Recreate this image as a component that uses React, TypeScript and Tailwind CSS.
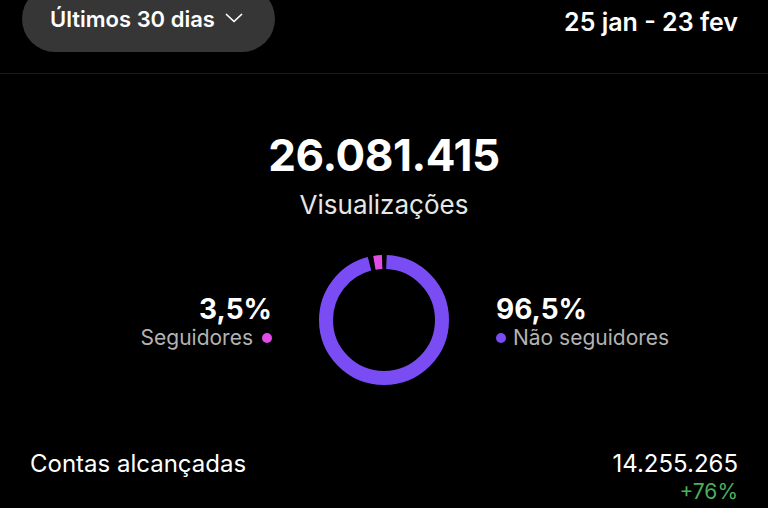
import React from 'react';

const R = 58;
const C = 2 * Math.PI * R;
const GAP = 2.5;

const followersShare = 0.035;

// Ring split into two arcs, starting at 12 o'clock and going clockwise
const Donut: React.FC = () => {
  const purpleLen = C * (1 - followersShare) - GAP * 2;
  const pinkLen = C * followersShare - GAP * 2;
  return (
    <svg width="140" height="140" viewBox="0 0 140 140" className="shrink-0">
      <g transform="rotate(-90 70 70)">
        <circle
          cx="70"
          cy="70"
          r={R}
          fill="none"
          stroke="#7a4cf3"
          strokeWidth="14"
          strokeDasharray={`${purpleLen} ${C - purpleLen}`}
          strokeDashoffset={-GAP}
        />
        <circle
          cx="70"
          cy="70"
          r={R}
          fill="none"
          stroke="#e24ce6"
          strokeWidth="14"
          strokeDasharray={`${pinkLen} ${C - pinkLen}`}
          strokeDashoffset={-(C * (1 - followersShare) + GAP)}
        />
      </g>
    </svg>
  );
};

const App: React.FC = () => {
  return (
    <div className="w-[768px] h-[508px] bg-black text-white overflow-hidden font-['Inter',sans-serif]">
      {/* Header: period picker + range */}
      <div className="h-[74px] flex items-start justify-between pl-[22px] pr-[30px] border-b border-[#1b1b1b]">
        <button className="-mt-[14px] h-[66px] w-[253px] rounded-full bg-[#363636] flex items-center pl-[28px] gap-[10px]">
          <span className="text-[22px] leading-none font-semibold">Últimos 30 dias</span>
          <svg width="18" height="10" viewBox="0 0 18 10" fill="none" className="mt-[-2px]">
            <path d="M1.5 1.5l7.5 7 7.5-7" stroke="white" strokeWidth="1.7" strokeLinecap="round" strokeLinejoin="round" />
          </svg>
        </button>
        <span className="mt-[10px] text-[25px] leading-none font-semibold">25 jan - 23 fev</span>
      </div>

      {/* Views summary */}
      <div className="flex flex-col items-center pt-[59px]">
        <div className="text-[44px] leading-none font-bold tracking-[-0.4px]">26.081.415</div>
        <div className="mt-[15px] text-[26px] leading-none text-[#e6e6e6]">Visualizações</div>

        <div className="mt-[32px] flex items-center">
          <div className="w-[200px] flex flex-col items-end mr-[42px] mt-[4px]">
            <span className="text-[28px] leading-[32px] font-bold">3,5%</span>
            <span className="flex items-center gap-[9px] text-[21px] leading-[26px] text-[#b3b3b3] whitespace-nowrap">
              Seguidores
              <span className="w-[10px] h-[10px] rounded-full bg-[#e24ce6]" />
            </span>
          </div>
          <Donut />
          <div className="w-[200px] flex flex-col items-start ml-[42px] mt-[4px]">
            <span className="text-[28px] leading-[32px] font-bold">96,5%</span>
            <span className="flex items-center gap-[7px] text-[21px] leading-[26px] text-[#b3b3b3] whitespace-nowrap">
              <span className="w-[10px] h-[10px] rounded-full bg-[#7a4cf3]" />
              Não seguidores
            </span>
          </div>
        </div>
      </div>

      {/* Reached accounts */}
      <div className="mt-[60px] flex justify-between items-start pl-[30px] pr-[30px]">
        <span className="text-[24px] leading-[28px]">Contas alcançadas</span>
        <div className="flex flex-col items-end">
          <span className="text-[24px] leading-[28px]">14.255.265</span>
          <span className="mt-[2px] text-[21px] leading-[24px] text-[#4caf5a]">+76%</span>
        </div>
      </div>
    </div>
  );
};

export default App;
